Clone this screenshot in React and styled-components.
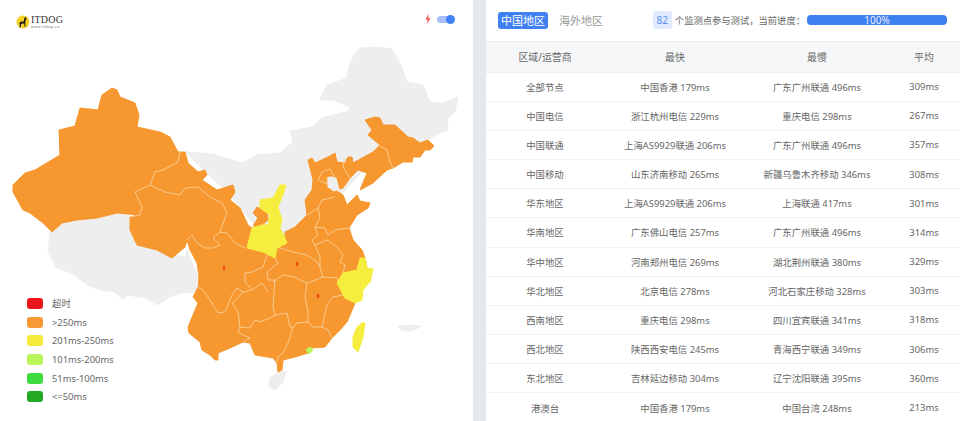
import styled, {createGlobalStyle} from 'styled-components'

const GlobalStyle = createGlobalStyle`
    html, body {
        margin: 0;
        padding: 0;
        background: #fff;
        overflow: hidden;
    }
    body {
        font-family: "Noto Sans", "Noto Sans CJK SC", sans-serif;
    }
`

const Page = styled.div`
    display: grid;
    grid-template-columns: 473px 13px 474px;
    width: 960px;
    height: 421px;
    overflow: hidden;
`

const MapPanel = styled.div`
    position: relative;
    height: 421px;
`

const MapDrawing = styled.svg`
    display: block;
    width: 473px;
    height: 421px;
`

const Gutter = styled.div`
    background: #e4e9f0;
`

const Logo = styled.div`
    position: absolute;
    top: 15px;
    left: 16px;
    display: flex;
    align-items: center;
    gap: 1px;
`

const LogoWords = styled.div`
    display: flex;
    flex-direction: column;
`

const LogoName = styled.span`
    font-family: "Liberation Serif", serif;
    font-size: 10px;
    line-height: 9px;
    letter-spacing: .2px;
    color: #333;
`

const LogoUrl = styled.span`
    font-family: "Liberation Sans", sans-serif;
    font-size: 4px;
    line-height: 5px;
    letter-spacing: .45px;
    color: #777;
`

const Toggle = styled.div`
    position: absolute;
    top: 14px;
    left: 425px;
    display: flex;
    align-items: center;
    gap: 6px;
`

const ToggleTrack = styled.div`
    position: relative;
    width: 17px;
    height: 7px;
    border-radius: 4px;
    background: #a9c1f8;
`

const ToggleKnob = styled.div`
    position: absolute;
    top: -1px;
    right: -1px;
    width: 9px;
    height: 9px;
    border-radius: 50%;
    background: #3f82f3;
`

const Legend = styled.ul`
    position: absolute;
    top: 298px;
    left: 27px;
    margin: 0;
    padding: 0;
    list-style: none;
    display: grid;
    grid-auto-rows: 11px;
    row-gap: 7.67px;
`

const LegendItem = styled.li`
    display: flex;
    align-items: center;
    gap: 9px;
    font-size: 9.4px;
    line-height: 11px;
    color: #666;
`

const Swatch = styled.span`
    width: 16px;
    height: 11px;
    border-radius: 3px;
    background: ${props => props.color};
`

const ResultPanel = styled.div`
    display: flex;
    flex-direction: column;
    min-width: 0;
`

const Toolbar = styled.div`
    display: flex;
    align-items: center;
    height: 40.5px;
    padding: 0 13px 0 12px;
    box-sizing: border-box;
`

const Tab = styled.div`
    height: 17px;
    padding: 0 3px;
    margin-right: 8px;
    border-radius: 3px;
    font-size: 11px;
    line-height: 17px;
    color: ${props => props.active ? '#fff' : '#999'};
    background: ${props => props.active ? '#4080f0' : 'transparent'};
`

const Progress = styled.div`
    display: flex;
    align-items: center;
    margin-left: auto;
`

const CountBadge = styled.span`
    width: 19px;
    height: 18px;
    border-radius: 2px;
    background: #e1ebfd;
    color: #5b8ef0;
    font-size: 10px;
    line-height: 18px;
    text-align: center;
`

const ProgressLabel = styled.span`
    margin: 0 2px 0 3px;
    font-size: 9.3px;
    color: #666;
    white-space: nowrap;
`

const ProgressBar = styled.div`
    width: 140px;
    height: 10px;
    border-radius: 4px;
    background: #3f80f0;
    color: #e8f0ff;
    font-size: 10px;
    line-height: 10px;
    text-align: center;
`

const Row = styled.div`
    display: grid;
    grid-template-columns: 118px 142px 142px 72px;
    align-items: center;
    height: 29.18px;
    box-sizing: border-box;
    border-bottom: 1px solid #eef0f3;
    font-size: 9.4px;
    color: #666;
    text-align: center;
    white-space: nowrap;
    &:last-child {
        border-bottom: none;
    }
`

const HeadRow = styled(Row)`
    height: 32px;
    background: #f6f7f8;
    border-top: 1px solid #eceef1;
    border-bottom: 1px solid #eceef1;
    font-size: 9.9px;
`

const rows = [
    ['全部节点', '中国香港 179ms', '广东广州联通 496ms', '309ms'],
    ['中国电信', '浙江杭州电信 229ms', '重庆电信 298ms', '267ms'],
    ['中国联通', '上海AS9929联通 206ms', '广东广州联通 496ms', '357ms'],
    ['中国移动', '山东济南移动 265ms', '新疆乌鲁木齐移动 346ms', '308ms'],
    ['华东地区', '上海AS9929联通 206ms', '上海联通 417ms', '301ms'],
    ['华南地区', '广东佛山电信 257ms', '广东广州联通 496ms', '314ms'],
    ['华中地区', '河南郑州电信 269ms', '湖北荆州联通 380ms', '329ms'],
    ['华北地区', '北京电信 278ms', '河北石家庄移动 328ms', '303ms'],
    ['西南地区', '重庆电信 298ms', '四川宜宾联通 341ms', '318ms'],
    ['西北地区', '陕西西安电信 245ms', '青海西宁联通 349ms', '306ms'],
    ['东北地区', '吉林延边移动 304ms', '辽宁沈阳联通 395ms', '360ms'],
    ['港澳台', '中国香港 179ms', '中国台湾 248ms', '213ms'],
]

const legend = [
    ['超时', '#e8161a'],
    ['>250ms', '#f59a34'],
    ['201ms-250ms', '#f5ea3c'],
    ['101ms-200ms', '#b9f55b'],
    ['51ms-100ms', '#3fdc3f'],
    ['<=50ms', '#22a822'],
]

const GREY = '#eeeeee'
const ORANGE = '#f6982f'
const YELLOW = '#f6ee3f'
const LINE = '#fbdfb8'

const north = '185,152 213,154 242,163 257,155 280,153 293,142 290,131 312,127 323,117 347,112 350,107 333,100 320,100 327,85 347,78 350,63 355,53 360,48 377,47 392,49 398,60 402,68 407,82 423,85 430,102 443,103 458,97 455,112 448,118 447,130 437,134 413,150 380,152 345,190 320,220 290,240 260,232 230,195'
const tibet = '50,233 62,223 77,220 97,218 113,213 128,213 130,230 137,243 163,250 175,255 185,257 187,250 198,277 195,292 180,293 170,297 157,305 147,298 127,295 123,300 115,292 100,290 88,285 72,273 57,268 48,252'
const tianjin = '328,177 336,178 339,189 334,191 328,187'
const hainan = '280,371 286,372 283,382 275,390 269,387 270,378'

const main = '112,88 117,90 120,97 135,103 139,115 137,127 160,132 170,137 178,152 185,152 188,163 198,172 205,170 207,175 202,180 217,190 233,185 235,192 230,200 240,208 248,225 252,228 285,238 285,232 295,227 307,215 305,200 312,190 313,180 308,160 312,158 315,163 328,157 335,153 337,162 345,163 348,157 352,157 353,163 373,152 380,145 368,135 372,130 365,120 375,117 380,118 383,125 395,125 408,137 413,138 420,143 428,140 434,146 430,150 425,150 420,157 413,157 412,162 403,162 393,168 387,170 373,183 360,190 367,173 358,170 350,178 343,188 335,190 343,195 347,205 352,200 357,195 360,201 370,203 368,208 357,215 349,228 353,240 362,250 365,258 367,268 360,290 355,303 353,308 347,322 340,330 332,338 325,347 312,348 308,353 295,357 283,360 282,370 278,372 277,363 273,358 255,355 250,343 243,342 230,348 218,353 218,360 215,360 210,355 202,350 200,342 189,333 188,327 193,315 198,303 193,297 198,287 199,277 197,263 190,250 187,240 185,247 172,258 157,250 137,245 130,230 130,217 138,215 117,213 97,218 77,220 62,223 52,232 43,223 30,213 23,210 13,192 13,185 25,173 35,170 60,155 59,130 75,126 80,108 98,110 102,95'
const ningxia = '257,207 267,212 268,220 260,227 253,226 258,218 253,213'
const shaanxi = '280,185 286,185 283,195 278,207 282,220 280,228 285,238 287,243 277,248 275,258 263,252 247,248 252,228 262,225 268,225 270,215 260,208 260,200 273,198'
const zhejiang = '360,258 365,258 367,268 373,269 370,282 363,290 362,300 355,303 345,298 337,283 343,273 357,270'
const taiwan = '362,323 365,323 363,337 358,352 353,347 353,337 357,327'
const hongkong = '306,350 310,347 313,350 309,354'

const borders = [
    '180,152 178,162 163,170 155,172 150,185 135,192 142,207 140,215 130,217',
    '150,185 165,192 180,195 185,188 198,187 210,197 222,203 227,213 220,232 213,238 220,245 213,248 205,248 197,243 192,235 187,240',
    '220,232 227,233 235,243 245,248',
    '198,287 203,290 210,300 218,313 225,312 232,295 237,288 243,292 252,290 262,283 268,292',
    '267,255 263,267 252,272 245,273 245,282 252,290',
    '275,258 278,263 267,272 268,280 275,280 273,307 275,315',
    '243,292 236,300 232,303 238,312 240,327 250,328 255,320 260,322 272,317 275,315 287,313 290,327 293,327 288,343 283,353 278,357 277,362',
    '240,327 238,332 243,335 250,338 243,342',
    '273,282 283,275 295,277 300,280 307,283 305,297 308,312 308,322 297,323 293,327',
    '307,283 323,277 337,278 343,295 333,297 327,305 322,327 313,327 308,322',
    '322,327 328,330 332,338',
    '277,247 293,252 307,255 317,262 320,267 323,277',
    '315,245 320,257 320,267',
    '337,247 343,255 340,262 345,265 343,273',
    '318,208 322,200 335,197',
    '307,215 318,208 320,218 315,227 325,228 328,235 335,230 349,228',
    '315,227 318,235 312,240 315,245 327,240 337,247',
    '318,180 322,172 330,169 334,176 327,178 327,184 318,180',
    '345,158 343,167 348,175 350,178',
    '378,145 387,150 390,162 393,168',
]

const bolts = [[224, 268], [297, 264], [318, 296]]

function Dog() {
    return (
        <svg width="14" height="14" viewBox="0 0 14 14">
            <circle cx="7" cy="7" r="6.5" fill="#f5d028" />
            <path d="M9.2 1.6 L9.8 3 L11 3.6 L9.9 4.5 L9.2 7.6 L9.6 11.8 L8.7 11.8 L8.2 8.6 L5.4 8.8 L4.4 12.6 L3.4 12.6 L3.9 8.8 L3 9 L4.4 6.8 L7.6 6.4 L8.4 3.4 Z" fill="#1d1a12" />
        </svg>
    )
}

function Region({points, color}) {
    return <polygon points={points} fill={color} stroke={color} strokeWidth="1" strokeLinejoin="round" />
}

function MapShape() {
    return (
        <MapDrawing viewBox="0 0 473 421">
            <Region points={north} color={GREY} />
            <Region points={tibet} color={GREY} />
            <Region points={hainan} color={GREY} />
            <path d="M397 326 Q410 323 423 326 Q412 333 402 331 Z" fill={GREY} />
            <Region points={main} color={ORANGE} />
            <Region points={tianjin} color={GREY} />
            <Region points={ningxia} color={ORANGE} />
            {borders.map(line => (
                <polyline key={line} points={line} fill="none" stroke={LINE} strokeWidth=".7" strokeLinejoin="round" />
            ))}
            <Region points={shaanxi} color={YELLOW} />
            <Region points={zhejiang} color={YELLOW} />
            <Region points={taiwan} color={YELLOW} />
            <Region points={hongkong} color="#b9f55b" />
            {bolts.map(([x, y]) => (
                <path key={x} transform={`translate(${x} ${y})`} d="M.8 -3.6 L-2 .6 L-.3 .6 L-.8 3.6 L2 -.6 L.3 -.6 Z" fill="#ee3a12" />
            ))}
        </MapDrawing>
    )
}

export default function App() {
    return (
        <Page>
            <GlobalStyle />
            <MapPanel>
                <MapShape />
                <Logo>
                    <Dog />
                    <LogoWords>
                        <LogoName>ITDOG</LogoName>
                        <LogoUrl>www.itdog.cn</LogoUrl>
                    </LogoWords>
                </Logo>
                <Toggle>
                    <svg width="6" height="10" viewBox="0 0 6 10">
                        <path d="M3.8 0 L.4 5.4 L2.6 5.4 L2 10 L5.6 4.2 L3.3 4.2 Z" fill="#f0534f" />
                    </svg>
                    <ToggleTrack>
                        <ToggleKnob />
                    </ToggleTrack>
                </Toggle>
                <Legend>
                    {legend.map(([label, color]) => (
                        <LegendItem key={label}>
                            <Swatch color={color} />
                            {label}
                        </LegendItem>
                    ))}
                </Legend>
            </MapPanel>
            <Gutter />
            <ResultPanel>
                <Toolbar>
                    <Tab active>中国地区</Tab>
                    <Tab>海外地区</Tab>
                    <Progress>
                        <CountBadge>82</CountBadge>
                        <ProgressLabel>个监测点参与测试，当前进度：</ProgressLabel>
                        <ProgressBar>100%</ProgressBar>
                    </Progress>
                </Toolbar>
                <HeadRow>
                    <span>区域/运营商</span>
                    <span>最快</span>
                    <span>最慢</span>
                    <span>平均</span>
                </HeadRow>
                {rows.map(row => (
                    <Row key={row[0]}>
                        {row.map(cell => <span key={cell}>{cell}</span>)}
                    </Row>
                ))}
            </ResultPanel>
        </Page>
    )
}
